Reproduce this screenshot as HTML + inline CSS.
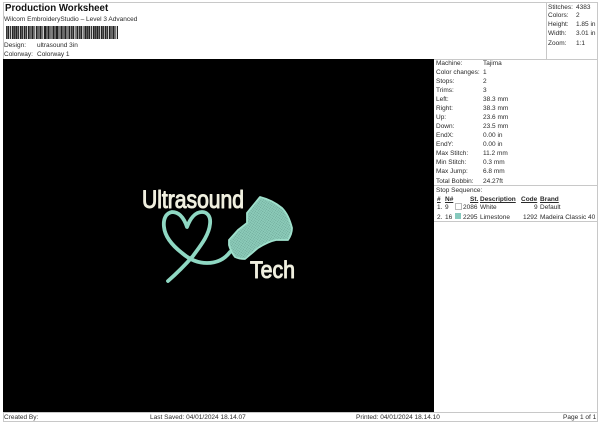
<!DOCTYPE html>
<html><head><meta charset="utf-8"><style>
html,body{margin:0;padding:0;background:#fff}
body{width:600px;height:424px;position:relative;overflow:hidden;font-family:"Liberation Sans",sans-serif;font-size:6.5px;color:#2a2a2a}
#w{position:absolute;left:0;top:0;width:600px;height:424px;background:#fff;filter:blur(.3px)}
.t{position:absolute;white-space:nowrap;line-height:9px;height:9px}
.l{position:absolute;background:#c8c8c8}
.u{font-weight:bold;text-decoration:underline}
</style></head><body><div id="w">
<div class="l" style="left:3px;top:2px;width:594px;height:1px"></div>
<div class="l" style="left:3px;top:2px;width:1px;height:420px"></div>
<div class="l" style="left:597px;top:2px;width:1px;height:420px"></div>
<div class="l" style="left:3px;top:421px;width:595px;height:1px"></div>
<div class="l" style="left:546px;top:2px;width:1px;height:57px"></div>
<div class="l" style="left:3px;top:59px;width:595px;height:1px"></div>
<div class="l" style="left:434px;top:185px;width:164px;height:1px"></div>
<div class="l" style="left:434px;top:221px;width:164px;height:1px"></div>
<div class="l" style="left:3px;top:412px;width:595px;height:1px"></div>
<div style="position:absolute;left:3px;top:59px;width:431px;height:353px;background:#000"></div>

<div class="t" style="left:5px;top:3px;font-size:9.7px;font-weight:bold;line-height:12px;height:12px;color:#111">Production Worksheet</div>
<div class="t" style="left:4px;top:15px">Wilcom EmbroideryStudio – Level 3 Advanced</div>
<div style="position:absolute;left:6px;top:26px;width:112px;height:13px;background:repeating-linear-gradient(90deg,#333 0 1px,#aaa 1px 1.6px,#222 1.6px 3.2px,#bbb 3.2px 4px,#333 4px 4.8px,#ccc 4.8px 5.8px,#222 5.8px 7.4px,#999 7.4px 8.1px)"></div>
<div class="t" style="left:4px;top:41px">Design:</div><div class="t" style="left:37px;top:41px">ultrasound 3in</div>
<div class="t" style="left:4px;top:50px">Colorway:</div><div class="t" style="left:37px;top:50px">Colorway 1</div>

<div class="t" style="left:548px;top:3px">Stitches:</div><div class="t" style="left:576px;top:3px">4383</div>
<div class="t" style="left:548px;top:11px">Colors:</div><div class="t" style="left:576px;top:11px">2</div>
<div class="t" style="left:548px;top:20px">Height:</div><div class="t" style="left:576px;top:20px">1.85 in</div>
<div class="t" style="left:548px;top:29px">Width:</div><div class="t" style="left:576px;top:29px">3.01 in</div>
<div class="t" style="left:548px;top:39px">Zoom:</div><div class="t" style="left:576px;top:39px">1:1</div>

<div class="t" style="left:436px;top:59px">Machine:</div><div class="t" style="left:483px;top:59px">Tajima</div>
<div class="t" style="left:436px;top:68px">Color changes:</div><div class="t" style="left:483px;top:68px">1</div>
<div class="t" style="left:436px;top:77px">Stops:</div><div class="t" style="left:483px;top:77px">2</div>
<div class="t" style="left:436px;top:86px">Trims:</div><div class="t" style="left:483px;top:86px">3</div>
<div class="t" style="left:436px;top:95px">Left:</div><div class="t" style="left:483px;top:95px">38.3 mm</div>
<div class="t" style="left:436px;top:104px">Right:</div><div class="t" style="left:483px;top:104px">38.3 mm</div>
<div class="t" style="left:436px;top:113px">Up:</div><div class="t" style="left:483px;top:113px">23.6 mm</div>
<div class="t" style="left:436px;top:122px">Down:</div><div class="t" style="left:483px;top:122px">23.5 mm</div>
<div class="t" style="left:436px;top:131px">EndX:</div><div class="t" style="left:483px;top:131px">0.00 in</div>
<div class="t" style="left:436px;top:140px">EndY:</div><div class="t" style="left:483px;top:140px">0.00 in</div>
<div class="t" style="left:436px;top:149px">Max Stitch:</div><div class="t" style="left:483px;top:149px">11.2 mm</div>
<div class="t" style="left:436px;top:158px">Min Stitch:</div><div class="t" style="left:483px;top:158px">0.3 mm</div>
<div class="t" style="left:436px;top:167px">Max Jump:</div><div class="t" style="left:483px;top:167px">6.8 mm</div>
<div class="t" style="left:436px;top:177px">Total Bobbin:</div><div class="t" style="left:483px;top:177px">24.27ft</div>
<div class="t" style="left:436px;top:186px">Stop Sequence:</div>

<div class="t u" style="left:437px;top:195px">#</div><div class="t u" style="left:445px;top:195px">N#</div><div class="t u" style="left:470px;top:195px">St.</div><div class="t u" style="left:480px;top:195px">Description</div><div class="t u" style="left:521px;top:195px">Code</div><div class="t u" style="left:540px;top:195px">Brand</div>
<div class="t" style="left:437px;top:203px">1.</div><div class="t" style="left:445px;top:203px">9</div><div style="position:absolute;left:455px;top:203px;width:5px;height:5px;border:1px solid #bbb;background:#fff"></div><div class="t" style="left:463px;top:203px">2086</div><div class="t" style="left:480px;top:203px">White</div><div class="t" style="left:534px;top:203px">9</div><div class="t" style="left:540px;top:203px">Default</div>
<div class="t" style="left:437px;top:213px">2.</div><div class="t" style="left:445px;top:213px">16</div><div style="position:absolute;left:455px;top:213px;width:6px;height:6px;background:#86c9bd"></div><div class="t" style="left:463px;top:213px">2295</div><div class="t" style="left:480px;top:213px">Limestone</div><div class="t" style="left:523px;top:213px">1292</div><div class="t" style="left:540px;top:213px">Madeira Classic 40</div>

<div class="t" style="left:4px;top:413px">Created By:</div>
<div class="t" style="left:150px;top:413px">Last Saved: 04/01/2024 18.14.07</div>
<div class="t" style="left:356px;top:413px">Printed: 04/01/2024 18.14.10</div>
<div class="t" style="left:563px;top:413px">Page 1 of 1</div>

<svg style="position:absolute;left:0;top:0" width="600" height="424" viewBox="0 0 600 424">
<defs><pattern id="m" width="2" height="2" patternUnits="userSpaceOnUse" patternTransform="rotate(35)"><rect width="2" height="2" fill="#8ccbb9"/><rect width="1" height="1" fill="#6fa99a"/></pattern></defs>
<path d="M168 281 C176 274 186 264 193 256 C201 245 209 235 210 224 C211 216 207 212 202 212 C195 212 190 219 187 227 C184 218 179 212 172 212 C166 213 163 219 164 227 C165 237 173 246 182 253 C189 259 198 263 207 263 C216 263 224 260 230 252" fill="none" stroke="#8fd8c3" stroke-width="3.8" stroke-linecap="round" stroke-linejoin="round"/>
<path d="M260 197 C268 199 276 203 282 208 C287 213 290 220 292 228 C292 233 290 237 288 240 C284 240 280 240 276 240 C271 241 266 243 258 248 L245 259 C241 259 237 258 235 257 C232 253 230 249 229 245 L229 240 L238 230 L247 223 L247 213 Z" fill="url(#m)" stroke="#9fe0cc" stroke-width="1.8" stroke-linejoin="round"/>
<text x="142" y="208" font-family="Liberation Sans, sans-serif" font-size="25" fill="#f0efdf" stroke="#f0efdf" stroke-width="1" stroke-linejoin="round" textLength="102" lengthAdjust="spacingAndGlyphs">Ultrasound</text>
<text x="250" y="278" font-family="Liberation Sans, sans-serif" font-size="24" fill="#f0efdf" stroke="#f0efdf" stroke-width="1" stroke-linejoin="round" textLength="45" lengthAdjust="spacingAndGlyphs">Tech</text>
</svg>
</div></body></html>
